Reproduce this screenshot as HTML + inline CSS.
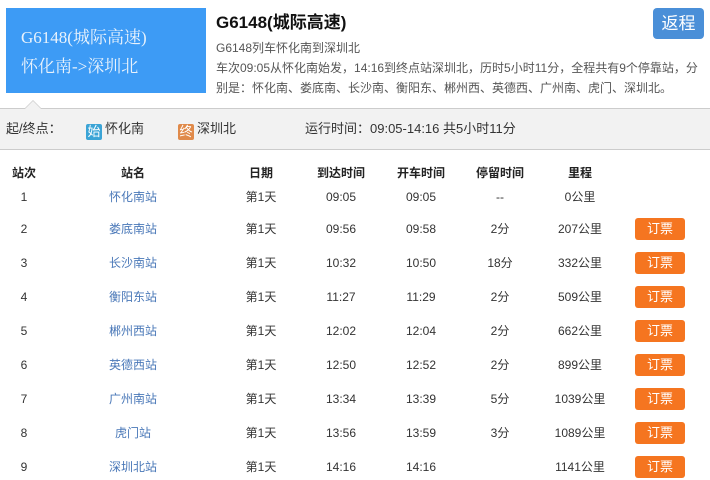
<!DOCTYPE html>
<html><head><meta charset="utf-8"><style>
*{margin:0;padding:0;box-sizing:border-box}
body{width:710px;height:480px;background:#fff;font-family:"Liberation Sans","Noto Sans CJK SC",sans-serif;position:relative;overflow:hidden;color:#333}
.a{position:absolute;white-space:nowrap}
.blue{left:6px;top:8px;width:200px;height:85px;background:#3d9bf5;color:#e8f2fc;font-family:"Liberation Serif","Noto Serif CJK SC",serif;font-size:17px;line-height:20px}
.bar{left:0;top:108px;width:710px;height:42px;background:#f2f2f2;border-top:1px solid #ccc;border-bottom:1px solid #ccc}
.tri{left:24px;top:100px;width:0;height:0;border-left:9px solid transparent;border-right:9px solid transparent;border-bottom:9px solid #ccc}
.tri2{left:25px;top:101px;width:0;height:0;border-left:8px solid transparent;border-right:8px solid transparent;border-bottom:8px solid #f2f2f2}
.d{font-size:12px;color:#555;line-height:16px}
.tag{display:inline-block;width:16px;height:16px;color:#fff;font-size:13px;line-height:16px;text-align:center;vertical-align:-3px;margin-right:3px;border-radius:2px}
.c{position:absolute;transform:translateX(-50%);font-size:12px;white-space:nowrap;color:#333;line-height:16px;height:16px}
.h{font-weight:bold;color:#222}
.l{color:#4a78b8}
.btn{position:absolute;left:635px;width:50px;height:22px;background:#f57520;color:#fff;border-radius:3px;font-size:13px;text-align:center;line-height:22px}
.g{font-size:13px;line-height:18px}
</style></head><body>
<div class="a blue"><div class="a" style="left:15px;top:20px">G6148(城际高速)</div><div class="a" style="left:15px;top:49px">怀化南-&gt;深圳北</div></div>
<div class="a" style="left:216px;top:12px;font-size:17px;line-height:22px;font-weight:bold;color:#111">G6148(城际高速)</div>
<div class="a" style="left:653px;top:8px;width:51px;height:31px;background:#4a8fd8;border-radius:4px;color:#fff;font-size:17px;text-align:center;line-height:31px">返程</div>
<div class="a d" style="left:216px;top:40px">G6148列车怀化南到深圳北</div>
<div class="a d" style="left:216px;top:60px">车次09:05从怀化南始发，14:16到终点站深圳北，历时5小时11分，全程共有9个停靠站，分</div>
<div class="a d" style="left:216px;top:80px">别是：怀化南、娄底南、长沙南、衡阳东、郴州西、英德西、广州南、虎门、深圳北。</div>
<div class="a bar"></div>
<div class="a tri"></div><div class="a tri2"></div>
<div class="a g" style="left:6px;top:120px">起/终点：</div>
<div class="a g" style="left:86px;top:120px"><span class="tag" style="background:#3ba4d6">始</span>怀化南</div>
<div class="a g" style="left:178px;top:120px"><span class="tag" style="background:#e08a4a">终</span>深圳北</div>
<div class="a g" style="left:305px;top:120px">运行时间：09:05-14:16 共5小时11分</div>
<div class="c h" style="left:24px;top:165px">站次</div>
<div class="c h" style="left:133px;top:165px">站名</div>
<div class="c h" style="left:261px;top:165px">日期</div>
<div class="c h" style="left:341px;top:165px">到达时间</div>
<div class="c h" style="left:421px;top:165px">开车时间</div>
<div class="c h" style="left:500px;top:165px">停留时间</div>
<div class="c h" style="left:580px;top:165px">里程</div>
<div id="rows"></div>
<script>
var d=[["1","怀化南站","09:05","09:05","--","0公里",189],["2","娄底南站","09:56","09:58","2分","207公里",221],["3","长沙南站","10:32","10:50","18分","332公里",255],["4","衡阳东站","11:27","11:29","2分","509公里",289],["5","郴州西站","12:02","12:04","2分","662公里",323],["6","英德西站","12:50","12:52","2分","899公里",357],["7","广州南站","13:34","13:39","5分","1039公里",391],["8","虎门站","13:56","13:59","3分","1089公里",425],["9","深圳北站","14:16","14:16","","1141公里",459]];
var h="";
d.forEach(function(r,i){var t=r[6];
h+='<div class="c" style="left:24px;top:'+t+'px">'+r[0]+'</div><div class="c l" style="left:133px;top:'+t+'px">'+r[1]+'</div><div class="c" style="left:261px;top:'+t+'px">第1天</div><div class="c" style="left:341px;top:'+t+'px">'+r[2]+'</div><div class="c" style="left:421px;top:'+t+'px">'+r[3]+'</div><div class="c" style="left:500px;top:'+t+'px">'+r[4]+'</div><div class="c" style="left:580px;top:'+t+'px">'+r[5]+'</div>';
if(i>0)h+='<div class="btn" style="top:'+(t-3)+'px">订票</div>';});
document.getElementById("rows").innerHTML=h;
</script>
</body></html>
